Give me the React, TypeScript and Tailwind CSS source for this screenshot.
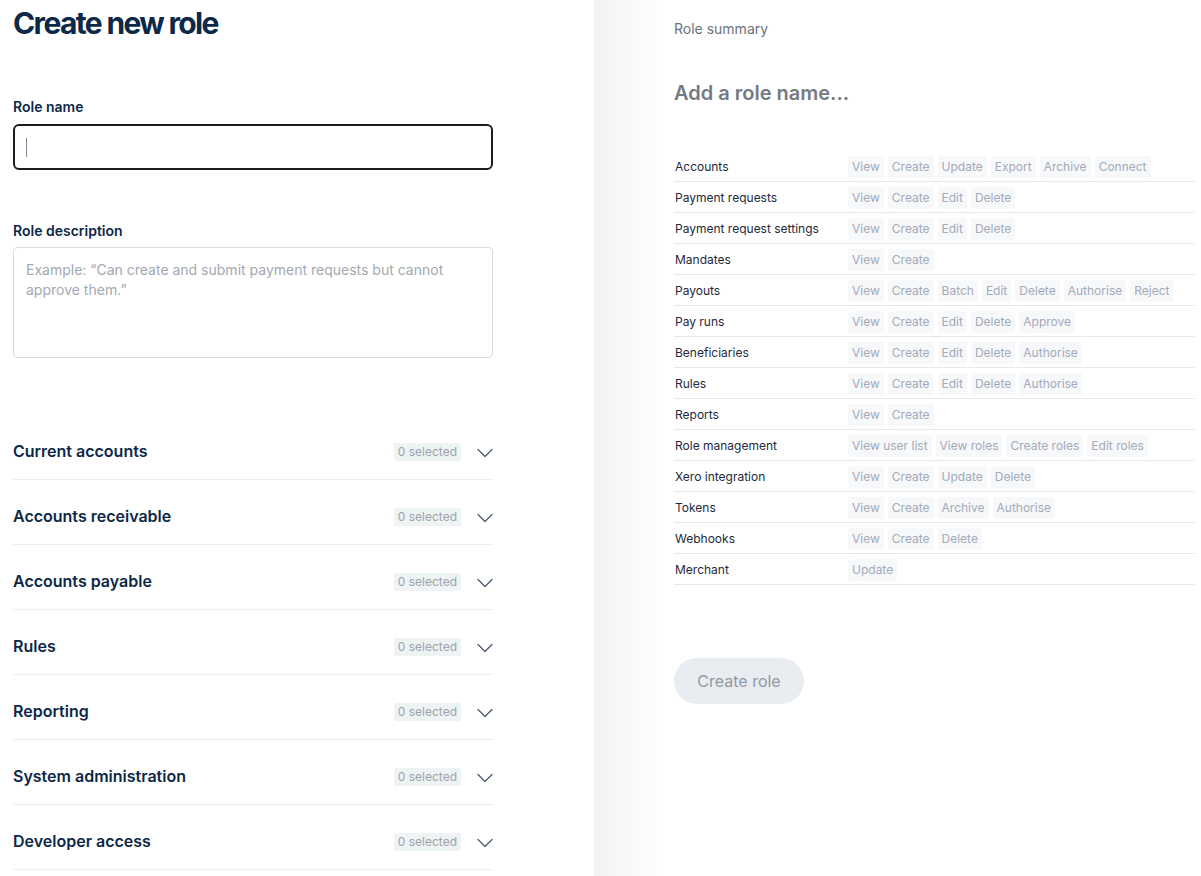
import React from 'react'

const sections = [
  'Current accounts',
  'Accounts receivable',
  'Accounts payable',
  'Rules',
  'Reporting',
  'System administration',
  'Developer access',
]

const permissions: [string, string[]][] = [
  ['Accounts', ['View', 'Create', 'Update', 'Export', 'Archive', 'Connect']],
  ['Payment requests', ['View', 'Create', 'Edit', 'Delete']],
  ['Payment request settings', ['View', 'Create', 'Edit', 'Delete']],
  ['Mandates', ['View', 'Create']],
  ['Payouts', ['View', 'Create', 'Batch', 'Edit', 'Delete', 'Authorise', 'Reject']],
  ['Pay runs', ['View', 'Create', 'Edit', 'Delete', 'Approve']],
  ['Beneficiaries', ['View', 'Create', 'Edit', 'Delete', 'Authorise']],
  ['Rules', ['View', 'Create', 'Edit', 'Delete', 'Authorise']],
  ['Reports', ['View', 'Create']],
  ['Role management', ['View user list', 'View roles', 'Create roles', 'Edit roles']],
  ['Xero integration', ['View', 'Create', 'Update', 'Delete']],
  ['Tokens', ['View', 'Create', 'Archive', 'Authorise']],
  ['Webhooks', ['View', 'Create', 'Delete']],
  ['Merchant', ['Update']],
]

const Chevron = () => (
  <svg width="16" height="10" viewBox="0 0 16 10" fill="none" className="mt-[4px]">
    <path d="M1 1.5l7 7 7-7" stroke="#4b5b70" strokeWidth="1.3" strokeLinecap="round" strokeLinejoin="round" />
  </svg>
)

const SectionRow = ({ title }: { title: string }) => (
  <div className="flex items-center justify-between border-b border-[#eceef0] pt-6 pb-4">
    <div className="text-[16px] leading-6 font-semibold text-[#0d2847]">{title}</div>
    <div className="flex items-center gap-4">
      <span className="mt-[2px] rounded-[2px] bg-[#eef3f3] px-1 text-[12px] leading-[18px] text-[#9ca3af]">
        0 selected
      </span>
      <Chevron />
    </div>
  </div>
)

export default function App() {
  return (
    <div className="flex min-h-[876px] w-full bg-white" style={{ fontFamily: 'Inter, "Noto Sans", sans-serif' }}>
      {/* left: form */}
      <div className="w-[594px] shrink-0 pl-[13px]">
        <div className="flex w-[480px] flex-col">
          <h1 className="mt-[5px] text-[30px] leading-9 font-bold tracking-[-0.055em] text-[#0c2948]">
            Create new role
          </h1>

          <label className="mt-[56px] text-[14px] leading-5 font-semibold text-[#0d2847]">Role name</label>
          <div className="mt-[7px] flex h-[46px] items-center rounded-[6px] border-2 border-[#1b1d21] px-[11px]">
            <span className="h-[19px] w-px bg-[#7c879a]" />
          </div>

          <label className="mt-[51px] text-[14px] leading-5 font-semibold text-[#0d2847]">Role description</label>
          <textarea
            className="mt-[6px] h-[111px] resize-none rounded-[4px] border border-[#d9dcdf] px-3 pt-3 text-[14px] leading-5 text-[#1f2937] outline-none placeholder:text-[#a3a8b3]"
            placeholder="Example: “Can create and submit payment requests but cannot approve them.”"
          />

          <div className="mt-[57px] flex flex-col">
            {sections.map((s) => (
              <SectionRow key={s} title={s} />
            ))}
          </div>
        </div>
      </div>

      {/* right: summary */}
      <div className="min-w-0 flex-1 bg-[linear-gradient(to_right,#f3f3f3,#ffffff_70px)] pl-[80px] pr-[6px]">
        <div className="mt-[19px] text-[14px] leading-5 text-[#6b7280]">Role summary</div>
        <div className="mt-[40px] text-[20px] leading-7 font-semibold text-[#747a84]">Add a role name...</div>

        <div className="mt-[44px] flex flex-col">
          {permissions.map(([name, perms]) => (
            <div key={name} className="flex h-[31px] items-center border-b border-[#e6e8eb]">
              <div className="w-[174px] shrink-0 pl-px pt-px text-[12px] text-[#1e293b]">{name}</div>
              <div className="flex gap-1 pt-px">
                {perms.map((p) => (
                  <span key={p} className="rounded-[2px] bg-[#f7f8fa] px-1 text-[12px] leading-[22px] text-[#a2aabb]">
                    {p}
                  </span>
                ))}
              </div>
            </div>
          ))}
        </div>

        <button className="mt-[73px] h-[46px] w-[130px] rounded-full bg-[#e9edf2] text-[16px] text-[#9299a5]">
          Create role
        </button>
      </div>
    </div>
  )
}
